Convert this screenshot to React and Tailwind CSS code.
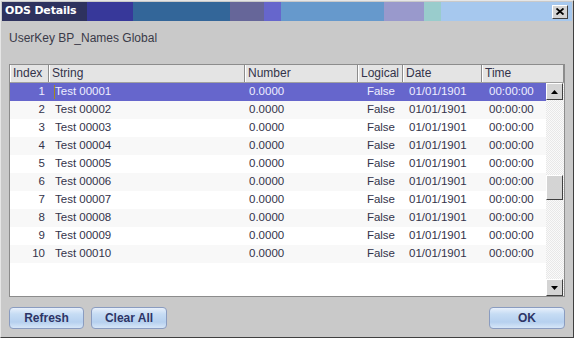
const rows = Array.from({ length: 10 }, (_, i) => ({
  index: i + 1,
  name: `Test ${String(i + 1).padStart(5, '0')}`,
}));

const cols = [
  { label: 'Index', w: 'w-[39px]' },
  { label: 'String', w: 'w-[196px]' },
  { label: 'Number', w: 'w-[113px]' },
  { label: 'Logical', w: 'w-[45px]' },
  { label: 'Date', w: 'w-[79px]' },
  { label: 'Time', w: 'flex-1' },
];

const Arrow = ({ up }) => (
  <div className="h-[17px] w-[17px] bg-[#d4d4d4] border border-t-white border-l-white border-r-[#404040] border-b-[#404040] flex items-center justify-center">
    <svg width="7" height="4" viewBox="0 0 7 4">
      <path d={up ? 'M0 4 L3.5 0 L7 4 Z' : 'M0 0 L3.5 4 L7 0 Z'} fill="#000" />
    </svg>
  </div>
);

const Btn = ({ label, w }) => (
  <button className={`${w} h-[22px] rounded-[4px] border border-[#8a9cc0] bg-[linear-gradient(180deg,#e8f0fb_0%,#c6dcf4_30%,#b6d0ef_70%,#d6e6f8_100%)] text-[12px] font-bold text-[#2d3466] leading-none`}>
    {label}
  </button>
);

export default function App() {
  return (
    <div className="w-[574px] h-[338px] bg-[#c9c9c9] border border-t-[#e6e6e6] border-l-[#e6e6e6] border-r-[#404040] border-b-[#404040] flex flex-col font-['Liberation_Sans',Arial,sans-serif] overflow-hidden">
      {/* title bar */}
      <div className="mx-[1px] mt-[1px] h-[19px] flex items-center justify-between pl-[3px] pr-[4px] bg-[linear-gradient(90deg,#2e325e_0,#2e325e_15%,#37389a_15%,#37389a_23%,#336699_23%,#336699_40%,#666699_40%,#666699_46%,#6666cc_46%,#6666cc_49%,#6699cc_49%,#6699cc_67%,#9999cc_67%,#9999cc_74%,#99cccc_74%,#99cccc_77%,#a6c8ee_77%)]">
        <span className="text-white font-bold text-[11px] font-['DejaVu_Sans',sans-serif] tracking-[-0.2px]">ODS Details</span>
        <div className="w-[16px] h-[14px] bg-[#d4d4d4] border border-t-white border-l-white border-r-[#404040] border-b-[#404040] flex items-center justify-center">
          <svg width="8" height="7" viewBox="0 0 8 7">
            <path d="M0.5 0.5 L7.5 6.5 M7.5 0.5 L0.5 6.5" stroke="#000" strokeWidth="1.8" />
          </svg>
        </div>
      </div>

      <div className="px-[8px] pt-[8px] text-[12px] text-[#3a3a48] h-[43px]">UserKey BP_Names Global</div>

      {/* table */}
      <div className="mx-[8px] h-[233px] border border-[#8c8c8c] flex flex-col bg-white">
        <div className="h-[18px] flex bg-[#e4e4e4] border-b border-[#a0a0a0] text-[12px] text-[#33334a]">
          {cols.map((c) => (
            <div key={c.label} className={`${c.w} border-r border-[#8c8c8c] px-[2px] leading-[17px] border-l border-l-white`}>
              {c.label}
            </div>
          ))}
        </div>
        <div className="flex-1 flex">
          <div className="flex-1 flex flex-col">
            {rows.map((r, i) => {
              const sel = i === 0;
              return (
                <div
                  key={r.index}
                  className={`h-[18px] flex items-center text-[11.5px] leading-none ${sel ? 'bg-[#6666cc] text-[#eeeeff]' : i % 2 ? 'bg-[#f8f8f8] text-[#33334a]' : 'bg-white text-[#33334a]'}`}
                >
                  <div className="w-[39px] text-right pr-[4px]">{r.index}</div>
                  <div className="w-[196px] pl-[6px] flex items-center">
                    {sel && <span className="w-px h-[14px] bg-[#a08a20] -ml-[1px]" />}
                    {r.name}
                  </div>
                  <div className="w-[113px] pl-[4px]">0.0000</div>
                  <div className="w-[45px] text-right pr-[8px]">False</div>
                  <div className="w-[79px] pl-[6px]">01/01/1901</div>
                  <div className="flex-1 pl-[7px]">00:00:00</div>
                </div>
              );
            })}
          </div>
          <div className="w-[18px] flex flex-col bg-[repeating-conic-gradient(#e8e8e8_0_25%,#fafafa_0_50%)] bg-[length:2px_2px]">
            <Arrow up />
            <div className="flex-1 flex flex-col pt-[75px]">
              <div className="h-[25px] w-[17px] bg-[#d4d4d4] border border-t-white border-l-white border-r-[#404040] border-b-[#404040]" />
            </div>
            <Arrow />
          </div>
        </div>
      </div>

      <div className="flex-1 flex items-center px-[8px] gap-[7px] pt-[1px]">
        <Btn label="Refresh" w="w-[75px]" />
        <Btn label="Clear All" w="w-[76px]" />
        <div className="flex-1" />
        <Btn label="OK" w="w-[76px]" />
      </div>
    </div>
  );
}
